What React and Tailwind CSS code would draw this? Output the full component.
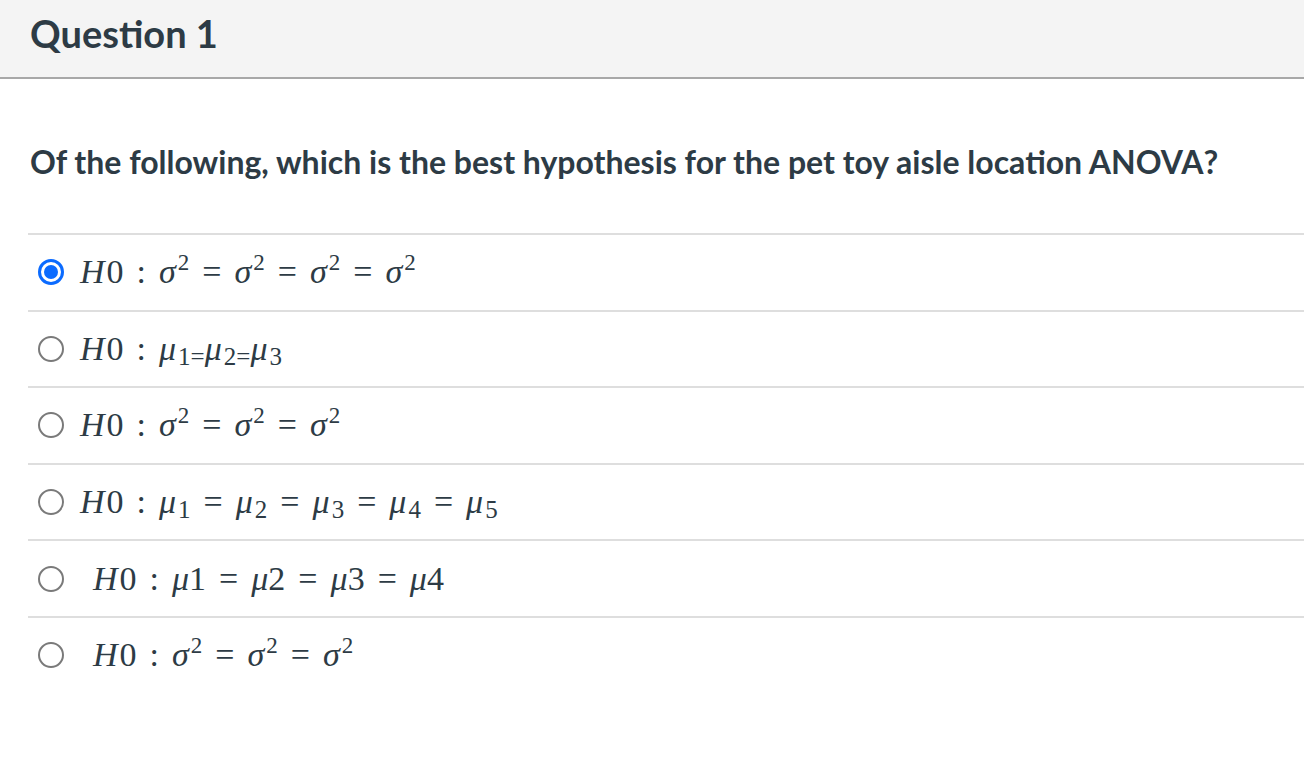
import React from "react";

const mathFont = { fontFamily: '"Liberation Serif", "DejaVu Serif", serif' };

function I({ children }) {
  return <span className="italic">{children}</span>;
}
function Rel({ children }) {
  return <span className="mx-[13px]">{children}</span>;
}
function Sig() {
  return (
    <span>
      <I>σ</I>
      <sup className="text-[23px] -top-[13px] ml-[2px]">2</sup>
    </span>
  );
}
function Mu({ sub }) {
  return (
    <span>
      <I>μ</I>
      <sub className="text-[25px] top-[5px] ml-[2px]">{sub}</sub>
    </span>
  );
}
function H0() {
  return (
    <>
      <I>H</I>
      <span className="ml-[2px]">0</span>
      <Rel>:</Rel>
    </>
  );
}

function Radio({ checked }) {
  if (checked) {
    return (
      <span className="w-[26px] h-[26px] rounded-full border-[3px] border-[#0b6bff] flex items-center justify-center shrink-0">
        <span className="w-[14px] h-[14px] rounded-full bg-[#0b6bff]" />
      </span>
    );
  }
  return (
    <span className="w-[26px] h-[26px] rounded-full border-2 border-[#7a7a7a] shrink-0" />
  );
}

function Row({ checked, indent, children }) {
  return (
    <div className="h-[76.6px] flex items-center pl-[10px] border-t-2 border-[#dedede]">
      <Radio checked={checked} />
      <div
        className={
          "text-[34px] text-[#2d3b45] leading-none whitespace-nowrap " +
          (indent ? "ml-[29px]" : "ml-[16px]")
        }
        style={mathFont}
      >
        {children}
      </div>
    </div>
  );
}

export default function App() {
  return (
    <div
      className="w-[1304px] h-[762px] bg-white overflow-hidden"
      style={{ fontFamily: 'Lato, "Open Sans", sans-serif' }}
    >
      <div className="h-[79px] bg-[#f4f4f4] border-b-2 border-[#a8a8a8] flex items-center px-[30px]">
        <h1 className="text-[38px] font-bold text-[#2d3b45] -mt-[10px]">
          Question 1
        </h1>
      </div>
      <div className="px-[30px] pt-[62px] pb-[50px]">
        <p className="text-[32px] font-bold text-[#2d3b45] leading-[42px]">
          Of the following, which is the best hypothesis for the pet toy aisle location ANOVA?
        </p>
      </div>
      <div className="ml-[28px]">
        <Row checked>
          <H0 />
          <Sig />
          <Rel>=</Rel>
          <Sig />
          <Rel>=</Rel>
          <Sig />
          <Rel>=</Rel>
          <Sig />
        </Row>
        <Row>
          <H0 />
          <Mu sub="1=" />
          <Mu sub="2=" />
          <Mu sub="3" />
        </Row>
        <Row>
          <H0 />
          <Sig />
          <Rel>=</Rel>
          <Sig />
          <Rel>=</Rel>
          <Sig />
        </Row>
        <Row>
          <H0 />
          <Mu sub="1" />
          <Rel>=</Rel>
          <Mu sub="2" />
          <Rel>=</Rel>
          <Mu sub="3" />
          <Rel>=</Rel>
          <Mu sub="4" />
          <Rel>=</Rel>
          <Mu sub="5" />
        </Row>
        <Row indent>
          <H0 />
          <I>μ</I>1<Rel>=</Rel>
          <I>μ</I>2<Rel>=</Rel>
          <I>μ</I>3<Rel>=</Rel>
          <I>μ</I>4
        </Row>
        <Row indent>
          <H0 />
          <Sig />
          <Rel>=</Rel>
          <Sig />
          <Rel>=</Rel>
          <Sig />
        </Row>
      </div>
    </div>
  );
}
